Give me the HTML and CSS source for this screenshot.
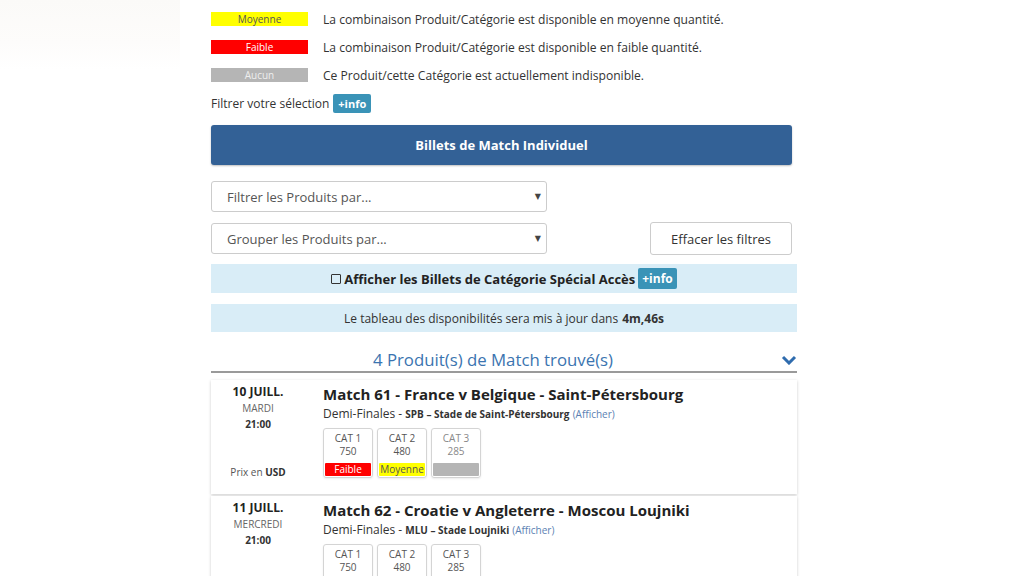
FILE: index.html
```html
<!DOCTYPE html>
<html lang="fr">
<head>
<meta charset="utf-8">
<title>Billets</title>
<link rel="stylesheet" href="styles.css">
</head>
<body>
<div class="fade"></div>
<main class="page">
  <ul class="legend">
    <li class="legend-row"><span class="tag tag-mid">Moyenne</span><span>La combinaison Produit/Catégorie est disponible en moyenne quantité.</span></li>
    <li class="legend-row"><span class="tag tag-low">Faible</span><span>La combinaison Produit/Catégorie est disponible en faible quantité.</span></li>
    <li class="legend-row"><span class="tag tag-none">Aucun</span><span>Ce Produit/cette Catégorie est actuellement indisponible.</span></li>
  </ul>
  <div class="filter-line">Filtrer votre sélection <span class="info">+info</span></div>

  <div class="title-bar">Billets de Match Individuel</div>

  <div class="controls">
    <div class="control-row">
      <div class="select">Filtrer les Produits par...<span class="caret">▼</span></div>
    </div>
    <div class="control-row control-row-2">
      <div class="select">Grouper les Produits par...<span class="caret">▼</span></div>
      <button class="clear">Effacer les filtres</button>
    </div>
  </div>

  <div class="notice notice-check"><span class="box"></span>Afficher les Billets de Catégorie Spécial Accès <span class="info info-lg">+info</span></div>
  <div class="notice notice-timer">Le tableau des disponibilités sera mis à jour dans <b>4m,46s</b></div>

  <h2 class="found">4 Produit(s) de Match trouvé(s)
    <svg class="chev" width="16" height="10" viewBox="0 0 16 10"><path d="M2 2 L8 8 L14 2" fill="none" stroke="#2f6cae" stroke-width="3"/></svg>
  </h2>

  <section class="card">
    <div class="date">
      <div class="day">10 JUILL.</div>
      <div class="weekday">MARDI</div>
      <div class="time">21:00</div>
      <div class="price">Prix en <b>USD</b></div>
    </div>
    <div class="info-col">
      <h3 class="match">Match 61 - France v Belgique - Saint-Pétersbourg</h3>
      <div class="sub">Demi-Finales - <b>SPB – Stade de Saint-Pétersbourg</b> <span class="link">(Afficher)</span></div>
      <div class="cats">
        <div class="cat"><span>CAT 1</span><span>750</span><span class="cat-tag tag-low">Faible</span></div>
        <div class="cat"><span>CAT 2</span><span>480</span><span class="cat-tag tag-mid">Moyenne</span></div>
        <div class="cat"><span class="dim">CAT 3</span><span class="dim">285</span><span class="cat-tag tag-none"></span></div>
      </div>
    </div>
  </section>

  <section class="card">
    <div class="date">
      <div class="day">11 JUILL.</div>
      <div class="weekday">MERCREDI</div>
      <div class="time">21:00</div>
    </div>
    <div class="info-col">
      <h3 class="match">Match 62 - Croatie v Angleterre - Moscou Loujniki</h3>
      <div class="sub">Demi-Finales - <b>MLU – Stade Loujniki</b> <span class="link">(Afficher)</span></div>
      <div class="cats">
        <div class="cat"><span>CAT 1</span><span>750</span></div>
        <div class="cat"><span>CAT 2</span><span>480</span></div>
        <div class="cat"><span>CAT 3</span><span>285</span></div>
      </div>
    </div>
  </section>
</main>
</body>
</html>
```
FILE: styles.css
```css
html, body { margin: 0; padding: 0; background: #fff; }
body {
  font-family: "Open Sans", "DejaVu Sans", sans-serif;
  color: #333;
  font-size: 12px;
  overflow: hidden;
  height: 576px;
  position: relative;
}
.fade {
  position: absolute; left: 0; top: 0; width: 180px; height: 70px;
  background: linear-gradient(180deg, #fbfaf8 0%, #fdfcfb 60%, #fff 100%);
}
.page {
  position: relative;
  margin-left: 211px;
  width: 586px;
  padding-top: 5px;
}
.legend { list-style: none; margin: 0; padding: 0; }
.legend-row {
  display: flex; align-items: center; height: 28px;
  gap: 15px; font-size: 12.1px; color: #333;
}
.tag {
  display: inline-block; width: 97px; height: 14px; line-height: 14px;
  text-align: center; font-size: 10px;
}
.tag-mid { background: #ffff00; color: #555; }
.tag-low { background: #ff0000; color: #fff; }
.tag-none { background: #b5b5b5; color: #eee; }
.filter-line {
  height: 28px; display: flex; align-items: center; gap: 4px; font-size: 12px;
}
.info {
  display: inline-block; background: #3a93b7; color: #fff; font-weight: 700;
  font-size: 11px; line-height: 19px; height: 19px; padding: 0 5px; border-radius: 2px;
}
.title-bar {
  margin-top: 8px; width: 581px; height: 40px; box-sizing: border-box;
  background: #336196; border-radius: 3px; color: #fff; font-weight: 700;
  font-size: 13px; display: flex; align-items: center; justify-content: center;
  box-shadow: 0 1px 2px rgba(0,0,0,0.25);
}
.controls { margin-top: 16px; width: 581px; }
.control-row { display: flex; justify-content: space-between; align-items: flex-end; }
.control-row-2 { margin-top: 10px; }
.select {
  width: 336px; height: 31px; box-sizing: border-box; border: 1px solid #ccc;
  border-radius: 3px; padding: 0 0 0 15px; font-size: 13px; color: #555;
  display: flex; align-items: center; position: relative;
}
.control-row-2 .select { margin-bottom: 1px; }
.caret { position: absolute; right: 5px; top: 8px; font-size: 8px; color: #444; }
.clear {
  width: 142px; height: 33px; box-sizing: border-box; border: 1px solid #ccc;
  border-radius: 3px; background: #fff; font-family: inherit; font-size: 13px; color: #333;
  padding: 0;
}
.notice {
  background: #d9edf7; display: flex; align-items: center; justify-content: center;
}
.notice-check {
  margin-top: 9px; height: 29px; font-weight: 700; font-size: 13px; color: #222; gap: 0;
}
.box {
  width: 8px; height: 8px; border: 1px solid #333; border-radius: 1px; margin-right: 3px;
}
.info-lg { margin-left: 3px; font-size: 12px; height: 21px; line-height: 21px; padding: 0 4px; }
.notice-timer { margin-top: 11px; height: 28px; font-size: 12px; color: #333; }
.notice-timer b { margin-left: 4px; }
.found {
  margin: 8px 0 0; height: 33px; box-sizing: border-box; border-bottom: 2px solid #9a9a9a;
  padding: 10px 22px 0 0;
  font-weight: 400; font-size: 16.8px; color: #3b74b0; text-align: center; line-height: 20px;
  position: relative;
}
.chev { position: absolute; right: 0; top: 15px; }
.card {
  margin-top: 7px; height: 114px; background: #fff; display: flex;
  box-shadow: 0 1px 3px rgba(0,0,0,0.2); box-sizing: border-box;
}
.card + .card { margin-top: 2px; }
.date {
  width: 94px; text-align: center; padding-top: 3px; display: flex;
  flex-direction: column; align-items: center;
}
.day { font-weight: 700; font-size: 12px; color: #222; line-height: 17px; }
.weekday { font-size: 10px; color: #666; line-height: 16px; }
.time { font-weight: 700; font-size: 10px; color: #333; line-height: 16px; }
.price { font-size: 10px; color: #555; margin-top: 33px; }
.price b { color: #333; }
.info-col { margin-left: 18px; padding-top: 3px; }
.match { margin: 0; font-size: 15px; font-weight: 700; color: #222; line-height: 22px; }
.sub { font-size: 12px; color: #333; margin-top: 1px; line-height: 16px; }
.sub b { font-size: 10px; }
.link { font-size: 10px; color: #5b7fb3; }
.cats { display: flex; gap: 4px; margin-top: 6px; }
.cat {
  width: 50px; height: 50px; box-sizing: border-box; border: 1px solid #d4d4d4;
  border-radius: 3px; display: flex; flex-direction: column; align-items: center;
  padding-top: 3px; font-size: 10px; color: #555; line-height: 13px;
  box-shadow: 0 1px 2px rgba(0,0,0,0.08);
}
.cat .dim { color: #888; }
.cat-tag {
  width: 46px; height: 13px; line-height: 13px; margin-top: 5px; font-size: 10px;
  border-radius: 1px; text-align: center;
}
```
